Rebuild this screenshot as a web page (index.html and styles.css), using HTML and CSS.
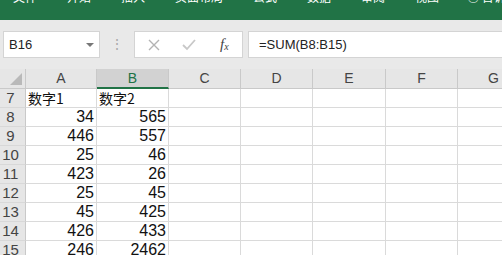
FILE: index.html
```html
<!DOCTYPE html>
<html lang="zh-CN">
<head>
  <meta charset="UTF-8" />
  <title>工作表</title>
  <link rel="stylesheet" href="styles.css">
</head>
<body>
  <div class="ribbon">
    <span class="tab">文件</span>
    <span class="tab">开始</span>
    <span class="tab">插入</span>
    <span class="tab">页面布局</span>
    <span class="tab">公式</span>
    <span class="tab">数据</span>
    <span class="tab">审阅</span>
    <span class="tab">视图</span>
    <span class="tab tell">&#9675; 告诉我你想要做什么</span>
  </div>

  <div class="toolbar">
    <div class="namebox">
      <span>B16</span>
      <span class="arrow"></span>
    </div>
    <div class="grip">&#8942;</div>
    <div class="fnbox">
      <svg width="12" height="12" viewBox="0 0 12 12"><path d="M1 1L11 11M11 1L1 11" stroke="#b3b3b3" stroke-width="1.4" fill="none"/></svg>
      <svg width="14" height="12" viewBox="0 0 14 12"><path d="M1 6L5 10L13 1" stroke="#c8c8c8" stroke-width="1.8" fill="none"/></svg>
      <span class="fx">f<sub>x</sub></span>
    </div>
    <div class="formula">=SUM(B8:B15)</div>
  </div>

  <div class="sheet">
    <div class="corner">
      <svg width="12" height="12" viewBox="0 0 12 12"><path d="M12 0L12 12L0 12Z" fill="#b9b9b9"/></svg>
    </div>
    <div class="col">A</div>
    <div class="col sel">B</div>
    <div class="col">C</div>
    <div class="col">D</div>
    <div class="col">E</div>
    <div class="col">F</div>
    <div class="col">G</div>
  </div>

  <script>
    // filas de datos
    var filas = [
      [7, "数字1", "数字2"],
      [8, 34, 565],
      [9, 446, 557],
      [10, 25, 46],
      [11, 423, 26],
      [12, 25, 45],
      [13, 45, 425],
      [14, 426, 433],
      [15, 246, 2462]
    ];
    var hoja = document.querySelector(".sheet");
    filas.forEach(function (f) {
      var html = '<div class="row">' + f[0] + '</div>';
      for (var i = 1; i < 8; i++) {
        var v = f[i];
        if (v === undefined) {
          html += '<div class="cell"></div>';
        } else if (typeof v === "number") {
          html += '<div class="cell num">' + v + '</div>';
        } else {
          html += '<div class="cell txt">' + v + '</div>';
        }
      }
      hoja.insertAdjacentHTML("beforeend", html);
    });
  </script>
</body>
</html>
```

FILE: styles.css
```css
body {
  margin: 0;
  width: 502px;
  height: 255px;
  overflow: hidden;
  background-color: #e9e9e9;
  font-family: "Liberation Sans", "Noto Sans CJK SC", sans-serif;
}

.ribbon {
  height: 20px;
  background-color: #217346;
  display: flex;
  gap: 30px;
  padding-left: 13px;
  overflow: hidden;
  white-space: nowrap;
}

.tab {
  font-family: "Noto Sans CJK SC", sans-serif;
  font-size: 12px;
  line-height: 12px;
  color: #ffffff;
  margin-top: -9px;
}

.tell {
  margin-left: -2px;
}

.toolbar {
  display: flex;
  align-items: stretch;
  height: 27px;
  padding: 11px 0 11px 3px;
}

.namebox {
  width: 97px;
  box-sizing: border-box;
  background-color: #fff;
  border: 1px solid #d4d4d4;
  display: flex;
  align-items: center;
  justify-content: space-between;
  padding: 0 5px 0 5px;
  font-size: 13px;
  color: #222;
}

.arrow {
  width: 0;
  height: 0;
  border-left: 4px solid transparent;
  border-right: 4px solid transparent;
  border-top: 4px solid #777;
}

.grip {
  width: 34px;
  text-align: center;
  color: #aaa;
  font-size: 14px;
  line-height: 27px;
}

.fnbox {
  width: 109px;
  box-sizing: border-box;
  background-color: #fff;
  border: 1px solid #d4d4d4;
  display: flex;
  align-items: center;
  gap: 22px;
  padding-left: 13px;
}

.fx {
  font-family: "Liberation Serif", serif;
  font-style: italic;
  font-size: 15px;
  color: #444;
  margin-left: 2px;
}

.fx sub {
  font-size: 10px;
  vertical-align: -1px;
}

.formula {
  flex: 1;
  margin-left: 5px;
  background-color: #fff;
  border: 1px solid #d4d4d4;
  border-right: none;
  font-size: 13px;
  line-height: 25px;
  padding-left: 10px;
  color: #222;
}

.sheet {
  display: grid;
  grid-template-columns: 26px 71px 72px 72px 72px 73px 72px 72px;
  grid-template-rows: 20px;
  grid-auto-rows: 19px;
  background-color: #fff;
}

.corner,
.col,
.row {
  background-color: #e6e6e6;
  color: #444;
  box-sizing: border-box;
}

.corner {
  border-right: 1px solid #c9c9c9;
  border-bottom: 1px solid #c9c9c9;
  display: flex;
  align-items: flex-end;
  justify-content: flex-end;
  padding: 0 3px 3px 0;
}

.col {
  border-right: 1px solid #c9c9c9;
  border-bottom: 1px solid #c9c9c9;
  text-align: center;
  font-size: 14px;
  line-height: 19px;
}

.col.sel {
  background-color: #d2d2d2;
  color: #217346;
  border-bottom: 2px solid #217346;
}

.row {
  border-right: 1px solid #c9c9c9;
  border-bottom: 1px solid #d8d8d8;
  font-size: 15px;
  line-height: 18px;
  padding-right: 4px;
  text-align: center;
}

.cell {
  border-right: 1px solid #dadada;
  border-bottom: 1px solid #dadada;
  box-sizing: border-box;
  color: #111;
  line-height: 18px;
  white-space: nowrap;
}

.num {
  text-align: right;
  padding-right: 2px;
  font-size: 16px;
}

.txt {
  font-family: "Noto Sans CJK SC", sans-serif;
  font-size: 14px;
  padding-left: 2px;
}
```
